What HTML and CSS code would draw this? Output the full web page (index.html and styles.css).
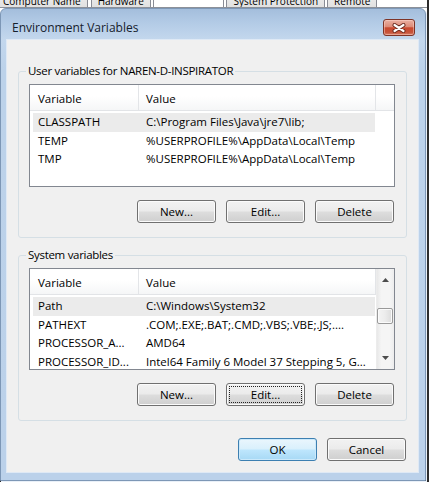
FILE: index.html
```html
<!DOCTYPE html>
<html>
<head>
<meta charset="utf-8">
<title>Environment Variables</title>
<link rel="stylesheet" href="styles.css">
</head>
<body>
<div class="desk">
  <div class="sheet">
    <div class="tabs">
      <div class="tab first">Computer Name</div>
      <div class="tab">Hardware</div>
      <div class="tab sel">Advanced</div>
      <div class="tab">System Protection</div>
      <div class="tab">Remote</div>
    </div>
  </div>

  <div class="dialog">
    <div class="titlebar">
      <span class="title">Environment Variables</span>
      <button class="close" aria-label="Close">
        <svg width="14" height="10" viewBox="-7 -5 14 10">
          <path d="M-4.5 -3 L4.5 3 M4.5 -3 L-4.5 3" stroke="#6a2a1e" stroke-width="4" stroke-linecap="round" fill="none"/>
          <path d="M-4.5 -3 L4.5 3 M4.5 -3 L-4.5 3" stroke="#ffffff" stroke-width="2.2" stroke-linecap="round" fill="none"/>
        </svg>
      </button>
    </div>

    <div class="client">
      <fieldset class="group g1">
        <legend>User variables for NAREN-D-INSPIRATOR</legend>
        <div class="list l1">
          <div class="list-main">
            <div class="lhead">
              <div class="hcol hvar">Variable</div>
              <div class="hcol hval">Value</div>
              <div class="hfill"></div>
            </div>
            <div class="rows">
              <div class="row selected"><span class="cvar">CLASSPATH</span><span class="cval">C:\Program Files\Java\jre7\lib;</span></div>
              <div class="row"><span class="cvar">TEMP</span><span class="cval">%USERPROFILE%\AppData\Local\Temp</span></div>
              <div class="row"><span class="cvar">TMP</span><span class="cval">%USERPROFILE%\AppData\Local\Temp</span></div>
            </div>
          </div>
        </div>
        <div class="btnrow">
          <button class="btn">New...</button>
          <button class="btn">Edit...</button>
          <button class="btn">Delete</button>
        </div>
      </fieldset>

      <fieldset class="group g2">
        <legend>System variables</legend>
        <div class="list l2">
          <div class="list-main">
            <div class="lhead">
              <div class="hcol hvar">Variable</div>
              <div class="hcol hval">Value</div>
            </div>
            <div class="rows">
              <div class="row selected"><span class="cvar">Path</span><span class="cval">C:\Windows\System32</span></div>
              <div class="row"><span class="cvar">PATHEXT</span><span class="cval">.COM;.EXE;.BAT;.CMD;.VBS;.VBE;.JS;....</span></div>
              <div class="row"><span class="cvar">PROCESSOR_A...</span><span class="cval">AMD64</span></div>
              <div class="row"><span class="cvar">PROCESSOR_ID...</span><span class="cval">Intel64 Family 6 Model 37 Stepping 5, G...</span></div>
            </div>
          </div>
          <div class="vscroll">
            <div class="sbtn"><svg width="7" height="4" viewBox="0 0 7 4"><path d="M0 4 L3.5 0 L7 4 Z" fill="#4d4d4d"/></svg></div>
            <div class="track"><div class="thumb"></div></div>
            <div class="sbtn"><svg width="7" height="4" viewBox="0 0 7 4"><path d="M0 0 L7 0 L3.5 4 Z" fill="#4d4d4d"/></svg></div>
          </div>
        </div>
        <div class="btnrow">
          <button class="btn">New...</button>
          <button class="btn focus">Edit...</button>
          <button class="btn">Delete</button>
        </div>
      </fieldset>

      <div class="dlgbtns">
        <button class="btn default">OK</button>
        <button class="btn">Cancel</button>
      </div>
    </div>
  </div>
</div>
</body>
</html>
```

FILE: styles.css
```css
* { box-sizing: border-box; }

html, body {
  margin: 0;
  padding: 0;
}

body {
  width: 433px;
  height: 484px;
  overflow: hidden;
  background: #ffffff;
  font-family: "Open Sans", "Noto Sans", sans-serif;
  font-size: 11.5px;
  color: #000;
}

.desk {
  position: relative;
  width: 433px;
  height: 484px;
}

/* underlying property sheet */
.sheet {
  width: 429px;
  height: 482px;
  border-right: 2px solid #2d2d2d;
  border-bottom: 2px solid #2d2d2d;
  background: #fff;
}

.tabs {
  display: flex;
  height: 8px;
  overflow: hidden;
  border-bottom: 1px solid #8c9098;
}

.tab {
  height: 20px;
  margin-top: -12px;
  margin-right: 2px;
  padding: 4px 6px 0;
  font-size: 10px;
  line-height: 16px;
  white-space: nowrap;
  border: 1px solid #898c95;
  background: linear-gradient(#f2f2f2, #e1e1e1);
  color: #000;
}

.tab.first { margin-left: -4px; margin-right: 3px; }

.tab.sel {
  height: 24px;
  margin-right: 2px;
  padding: 16px 12px 0;
  background: #fff;
  border-color: #898c95;
  border-bottom: none;
}

/* dialog window */
.dialog {
  position: absolute;
  left: 0;
  top: 8px;
  width: 426px;
  height: 473px;
  border: 1px solid #7d97b6;
  border-radius: 6px 6px 0 0;
  background: linear-gradient(#a4bedc 0, #b3cbe6 14px, #c3d7ed 30px, #bcd2ea 60px, #bbd1ea 100%);
  padding: 0 7px 8px 6px;
  display: flex;
  flex-direction: column;
  box-shadow: 1px 1px 0 #e9f0f8;
}

.titlebar {
  height: 31px;
  display: flex;
  align-items: flex-start;
  justify-content: space-between;
}

.title {
  margin: 11px 0 0 5px;
  font-size: 12px;
  line-height: 16px;
  color: #15202c;
}

.close {
  margin: 10px 3px 0 0;
  width: 32px;
  height: 17px;
  padding: 0;
  border: 1px solid #7e3427;
  border-radius: 3px;
  background: linear-gradient(#eab0a2 0%, #dd8b78 45%, #c9492f 52%, #c6533a 82%, #d98068 100%);
  box-shadow: inset 0 0 0 1px rgba(255, 220, 210, 0.45);
  display: flex;
  align-items: center;
  justify-content: center;
}

.client {
  flex: 1;
  background: #f0f0f0;
  box-shadow: 0 0 0 1px #dfe9f5;
  padding: 23px 11px 0;
  display: flex;
  flex-direction: column;
}

/* group boxes */
.group {
  margin: 0;
  border: 1px solid #d5dfe5;
  border-radius: 3px;
  padding: 5px 11px 14px 10px;
  min-width: 0;
}

.group legend {
  padding: 0 2px;
  margin-left: -3px;
  line-height: 16px;
  letter-spacing: -0.3px;
  color: #000;
}

.g2 { margin-top: 9px; }

/* list views */
.list {
  border: 1px solid #828790;
  background: #fff;
  display: flex;
  overflow: hidden;
}

.l1 { height: 103px; }
.l2 { height: 102px; }

.list-main {
  flex: 1;
  min-width: 0;
}

.lhead {
  display: flex;
  height: 26px;
  border-bottom: 1px solid #e2e4e7;
  background: linear-gradient(#ffffff 0%, #ffffff 45%, #f5f6f7 100%);
}

.hcol {
  line-height: 27px;
  border-right: 1px solid #e3e5e8;
  white-space: nowrap;
}

.hvar { width: 109px; padding-left: 8px; }
.hval { width: 237px; padding-left: 7px; }
.hfill { flex: 1; }

.rows {
  padding: 2px 0 0 3px;
  width: 345px;
}

.row {
  display: flex;
  height: 18.5px;
  line-height: 18.5px;
  white-space: nowrap;
}

.row.selected { background: #ebebeb; }

.cvar { width: 106px; padding-left: 5px; flex: none; }
.cval { padding-left: 7px; overflow: hidden; }

/* scrollbar */
.vscroll {
  width: 18px;
  flex: none;
  display: flex;
  flex-direction: column;
  background: linear-gradient(90deg, #e8e8e8 0%, #f5f5f5 25%, #f5f5f5 75%, #ededed 100%);
  border-left: 1px solid #ececec;
}

.sbtn {
  height: 22px;
  display: flex;
  align-items: center;
  justify-content: center;
}

.track {
  flex: 1;
  padding: 17px 1px 0 0;
}

.thumb {
  height: 16px;
  border: 1px solid #9a9a9a;
  border-radius: 2px;
  background: linear-gradient(90deg, #f4f4f4 0%, #ececec 50%, #dcdcdc 100%);
  box-shadow: inset 0 0 0 1px #fbfbfb;
}

/* buttons */
.btnrow {
  display: flex;
  justify-content: flex-end;
  gap: 10px;
  margin-top: 13px;
  padding-right: 1px;
}

.btn {
  width: 79px;
  height: 23px;
  padding: 0;
  border: 1px solid #707070;
  border-radius: 3px;
  background: linear-gradient(#f2f2f2 0%, #ebebeb 48%, #dddddd 52%, #cfcfcf 100%);
  box-shadow: inset 0 0 0 1px #fbfbfb;
  font-family: inherit;
  font-size: 11.5px;
  color: #000;
}

.btn.focus {
  outline: 1px dotted #222;
  outline-offset: -4px;
}

.btn.default {
  border-color: #3c7fb1;
  background: linear-gradient(#eaf6fd 0%, #d9f0fc 48%, #bee6fd 52%, #a7d9f5 100%);
  box-shadow: inset 0 0 0 1px #cbe9fb;
}

.dlgbtns {
  display: flex;
  justify-content: flex-end;
  gap: 10px;
  margin-top: 17px;
  padding-right: 1px;
}
```
